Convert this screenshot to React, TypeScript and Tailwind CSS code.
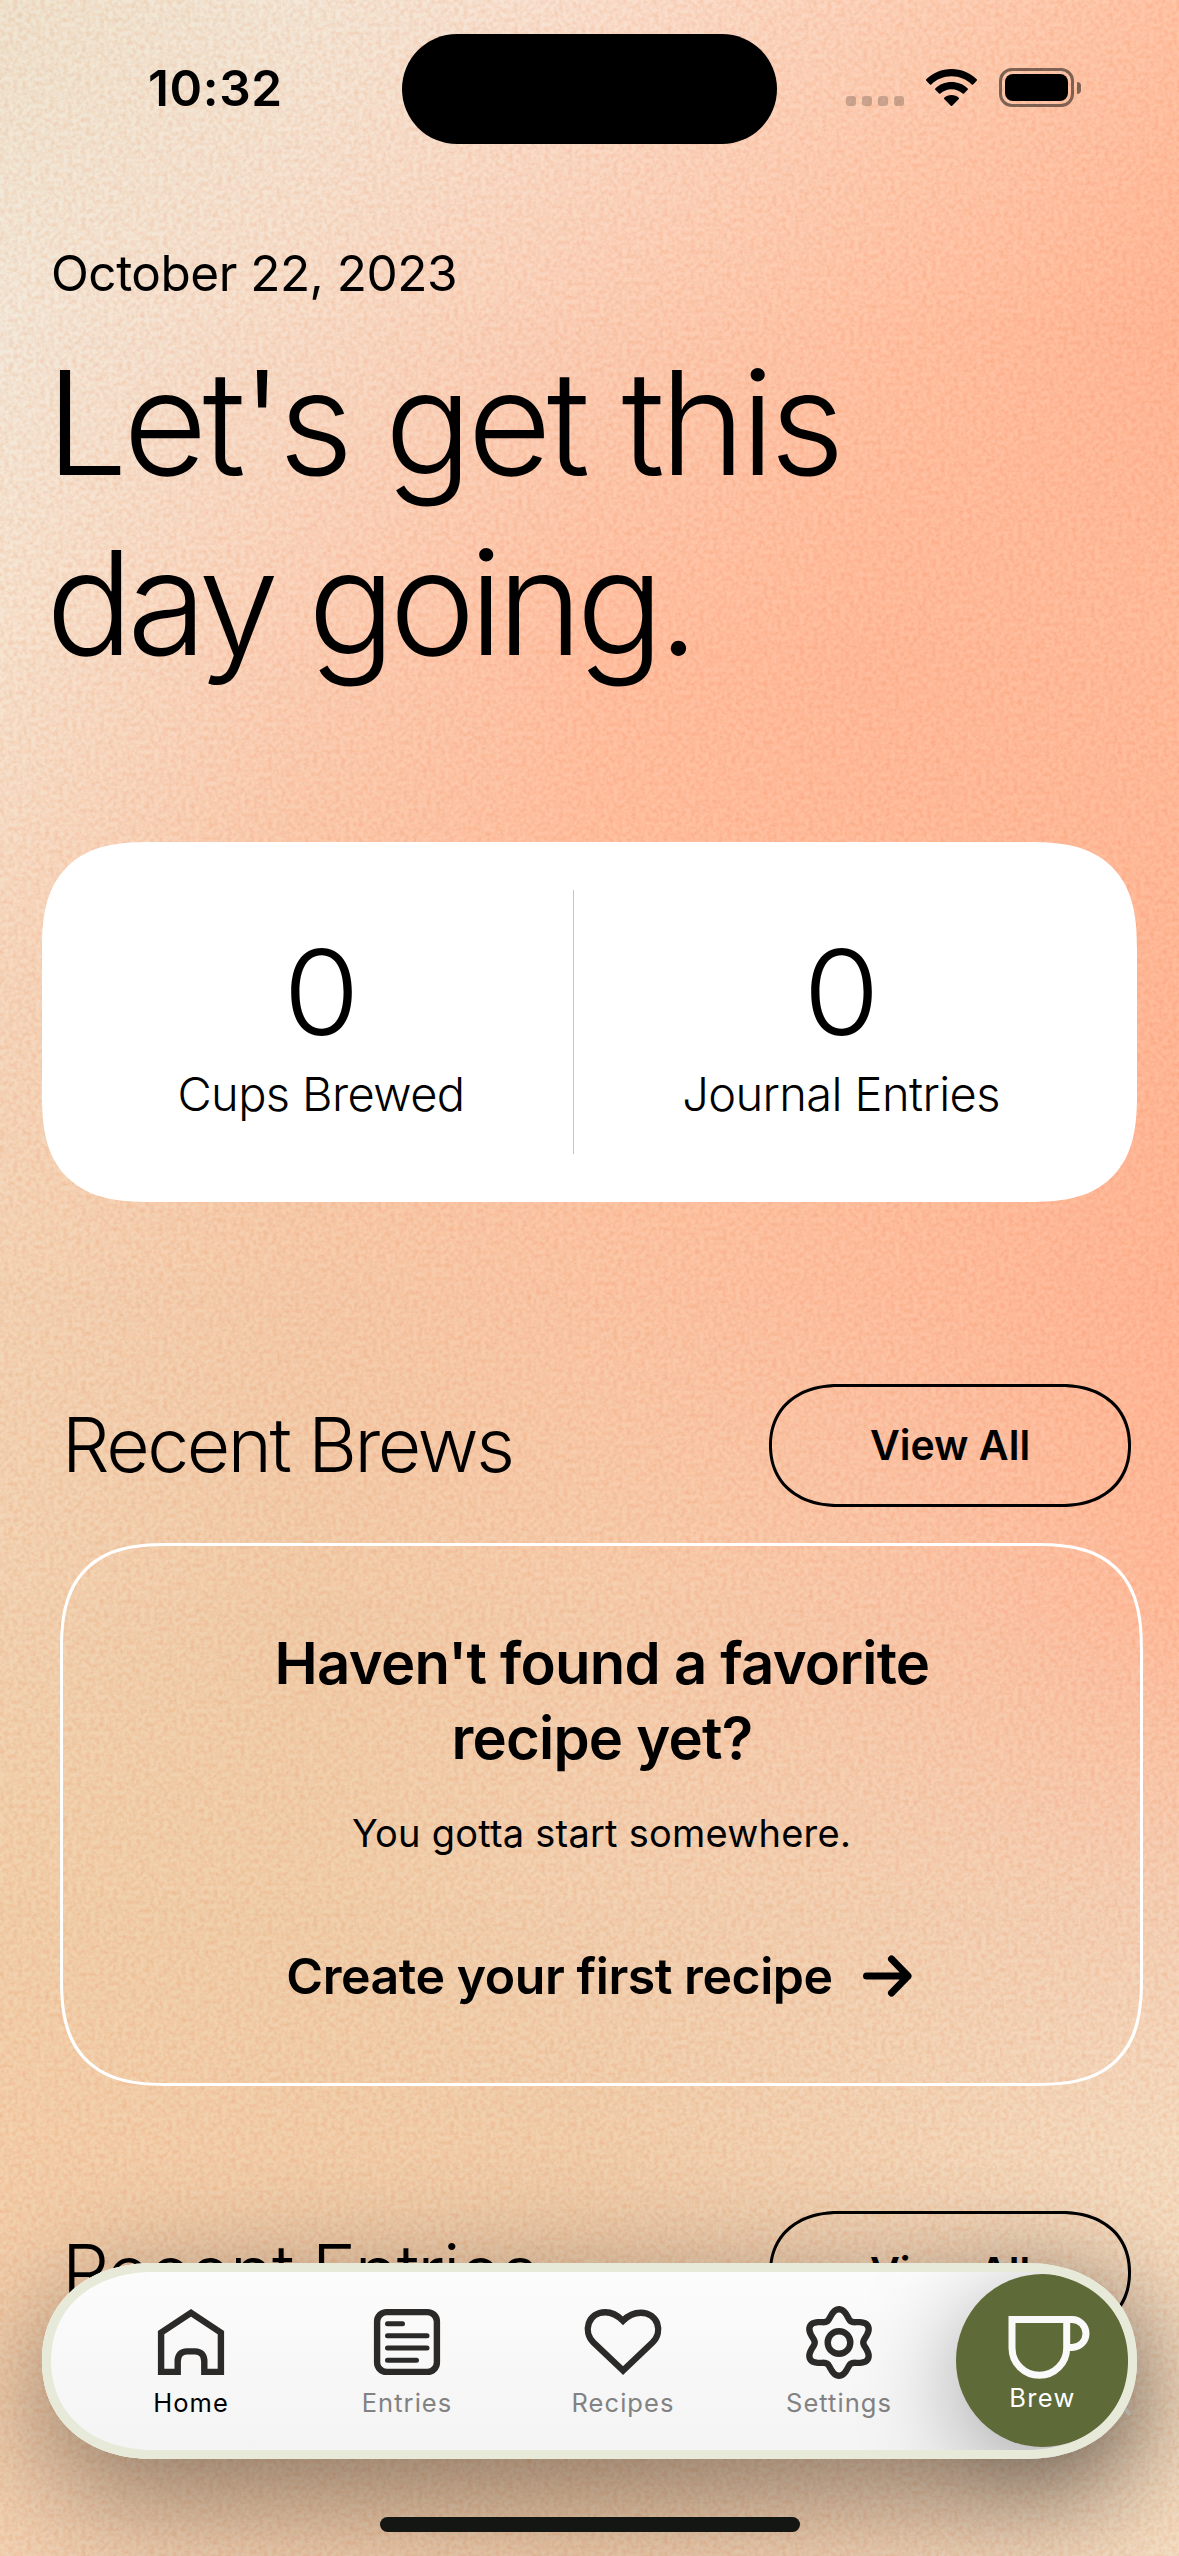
import React from "react";

/* Colour mesh of the backdrop: every row is a horizontal gradient that fades into the next one. */
const MESH: { y: number; colors: string[] }[] = [
  { y: 0, colors: ["#efe5d1", "#f3e9da", "#f9e2d2", "#fcd4bc", "#ffc6a8"] },
  { y: 320, colors: ["#f3eadc", "#f7dfcc", "#fbd1b9", "#ffc5a7", "#ffba9a"] },
  { y: 640, colors: ["#f6e5d2", "#fbd2ba", "#ffc3a5", "#ffbd9d", "#ffbf9f"] },
  { y: 960, colors: ["#f6dac2", "#fac9a9", "#ffc1a1", "#ffbf9e", "#ffbb9a"] },
  { y: 1280, colors: ["#f3d6b8", "#f5ceae", "#fbc8a8", "#fec1a2", "#ffb999"] },
  { y: 1600, colors: ["#f2d5b5", "#f1cfad", "#f5d0b0", "#f9caad", "#ffbe9f"] },
  { y: 1900, colors: ["#f1d2ae", "#f0d1ad", "#f2d3b4", "#f3d3b6", "#f5d2b8"] },
  { y: 2150, colors: ["#f3d1ad", "#f1d0ad", "#f0d0ae", "#f2d6b8", "#f4dec4"] },
  { y: 2556, colors: ["#f2d4b6", "#efd0b1", "#eeceae", "#f1d5b9", "#f4e0c6"] },
];

function Backdrop() {
  return (
    <div className="absolute inset-0 isolate overflow-hidden">
      {MESH.map((row, i) => {
        const top = i === 0 ? 0 : MESH[i - 1].y;
        const fade = `linear-gradient(to bottom, transparent 0px, black ${row.y - top}px)`;
        return (
          <div
            key={row.y}
            className="absolute inset-x-0 bottom-0"
            style={{
              top,
              backgroundImage: `linear-gradient(to right, ${row.colors.join(", ")})`,
              maskImage: i === 0 ? undefined : fade,
            }}
          />
        );
      })}
      <svg className="absolute inset-0 size-full opacity-50 mix-blend-multiply" aria-hidden="true">
        <filter id="grain" x="0" y="0" width="100%" height="100%" colorInterpolationFilters="sRGB">
          <feTurbulence type="fractalNoise" baseFrequency="0.22" numOctaves="3" seed="4" />
          <feColorMatrix values="0 0 0 0 0.97  0 0 0 0 0.8  0 0 0 0 0.7  1.9 0 0 0 -0.65" />
        </filter>
        <rect width="100%" height="100%" filter="url(#grain)" />
      </svg>
    </div>
  );
}

function StatusBar() {
  return (
    <header className="flex h-[178px] items-center">
      <div className="w-[402px] pb-[2px] pl-[148px] text-[49.5px] leading-[60px] font-semibold tracking-[0.6px]">10:32</div>
      <div className="h-[110px] w-[375px] rounded-full bg-black" />
      <div className="ml-[69px] flex gap-[6px] pt-[24px]">
        {[0, 1, 2, 3].map((n) => (
          <span key={n} className="size-[10px] rounded-[3px] bg-black/20" />
        ))}
      </div>
      <svg className="mb-[3px] ml-[22px] h-[38px] w-[51px]" viewBox="0 0 51 38">
        <path d="M25.5 0C35.3 0 44.2 3.9 50.7 10.3c.4.4.4 1 0 1.4l-3.6 3.7c-.4.4-1 .4-1.4 0C40.4 10.300 33.300 7.300 25.500 7.300S10.600 10.300 5.300 15.400c-.4.4-1 .4-1.400 0L.3 11.700c-.4-.4-.4-1 0-1.400C6.800 3.900 15.700 0 25.500 0Z" />
        <path d="M25.500 13c6.300 0 12 2.400 16.200 6.400.4.4.4 1 0 1.400l-3.700 3.700c-.4.4-1 .4-1.400 0-2.900-2.700-6.800-4.300-11.100-4.300s-8.200 1.600-11.100 4.300c-.4.4-1 .4-1.400 0l-3.700-3.700c-.4-.4-.4-1 0-1.400C13.500 15.400 19.200 13 25.500 13Z" />
        <path d="M25.500 26c2.800 0 5.300 1 7.300 2.700.4.4.4 1 0 1.400l-6.600 6.600c-.4.4-1 .4-1.400 0l-6.600-6.600c-.4-.4-.4-1 0-1.400C20.200 27 22.700 26 25.500 26Z" />
      </svg>
      <div className="mb-[3px] ml-[22px] flex items-center gap-[3px]">
        <div className="h-[39px] w-[75px] rounded-[13px] border-[3px] border-black/50 p-[3px]">
          <div className="size-full rounded-[8px] bg-black" />
        </div>
        <div className="h-[12px] w-[4px] rounded-r-full bg-black/50" />
      </div>
    </header>
  );
}

function Stat({ label, className }: { label: string; className: string }) {
  return (
    <div className={`flex flex-col items-center pt-[80px] font-light ${className}`}>
      <span className="scale-x-105 text-[118px] leading-[140px]">0</span>
      <span className="mt-[2px] text-[47px] leading-[60px] tracking-[-0.6px]">{label}</span>
    </div>
  );
}

function SectionHeader({ title, className, titleClassName }: { title: string; className: string; titleClassName: string }) {
  return (
    <div className={`flex items-center justify-between pr-[48px] pl-[62px] ${className}`}>
      <h2 className={`pb-[2px] text-[75px] leading-[90px] font-light ${titleClassName}`}>{title}</h2>
      <button className="h-[123px] w-[362px] rounded-[70px/61.5px] border-[3px] border-black text-[41px] font-semibold [corner-shape:superellipse(1.15)]">
        View All
      </button>
    </div>
  );
}

const GEAR =
  Array.from({ length: 180 }, (_, i) => {
    const a = (i / 180) * Math.PI * 2;
    const r = 28.8 + 4.5 * Math.cos(6 * a);
    return `${i === 0 ? "M" : "L"}${(37 + r * Math.sin(a)).toFixed(2)} ${(37.5 - r * Math.cos(a)).toFixed(2)}`;
  }).join("") + "Z";

const TABS: { label: string; active?: boolean; icon: React.ReactNode }[] = [
  {
    label: "Home",
    active: true,
    icon: <path d="M7.100 27.600 37 7.800 66.900 27.600V66.900H50.300V56.500C50.300 50 47 46.400 41 46.400H33C27 46.400 23.700 50 23.700 56.500V66.900H7.100Z" />,
  },
  {
    label: "Entries",
    icon: (
      <>
        <rect x="7.100" y="7.100" width="59.800" height="59.800" rx="9.500" />
        <path strokeWidth="5" strokeLinecap="round" d="M17.500 18.700H32.500M17.500 30.800H57M17.500 43H57M17.500 55.300H46.500" />
      </>
    ),
  },
  {
    label: "Recipes",
    icon: (
      <path d="M37 65.500 7.500 37.500C-3.500 26.500 2 7.200 19.300 7.200 27 7.200 31.500 10.200 37 15.700 42.500 10.200 47 7.700 54.700 7.700 72 8 77.500 26.500 66.500 37.500Z" />
    ),
  },
  {
    label: "Settings",
    icon: (
      <>
        <path d={GEAR} />
        <circle cx="37" cy="37.500" r="11.300" />
      </>
    ),
  },
];

function TabBar() {
  return (
    <nav className="absolute top-[2263px] left-[42px] h-[196px] w-[1095px] rounded-[112px/98px] bg-linear-to-b from-[#fcfcfc] to-[#f4f4f4] shadow-[0_36px_120px_rgba(0,0,0,0.42)] [corner-shape:superellipse(1.12)]">
      <svg className="absolute top-[143px] left-[1080px] h-[10px] w-[10px]" viewBox="0 0 10 10">
        <path d="M1 0 8 9" stroke="#c9c4be" strokeWidth="3.500" />
      </svg>
      <div className="flex pt-[42px] pl-[41px]">
        {TABS.map((tab) => (
          <div key={tab.label} className="flex w-[216px] flex-col items-center">
            <svg className="size-[74px] overflow-visible" viewBox="0 0 74 74" fill="none" stroke="#2b2a29" strokeWidth="6.400">
              {tab.icon}
            </svg>
            <span
              className={`mt-[7px] text-[25.5px] leading-[34px] tracking-[1.05px] ${tab.active ? "text-black" : "text-[#828282]"}`}
            >
              {tab.label}
            </span>
          </div>
        ))}
      </div>
      <button className="absolute top-[11px] left-[914px] flex size-[173px] flex-col items-center rounded-full bg-[#5e6a37] pt-[42px] text-white shadow-[0_22px_100px_rgba(0,0,0,0.34)]">
        <svg className="h-[63px] w-[70px] overflow-visible" viewBox="0 0 70 63" fill="none" stroke="#f9f9f9" strokeWidth="7">
          <path d="M4 3.500H58.700V32A27.350 27.350 0 0 1 4 32Z" />
          <path d="M58.700 3.500H64A14 14 0 0 1 64 31.500H58.700" />
        </svg>
        <span className="mt-[2px] text-[25.5px] leading-[34px] tracking-[1.4px]">Brew</span>
      </button>
      <div className="pointer-events-none absolute inset-0 rounded-[112px/98px] border-[9px] border-[#e7ead8] [corner-shape:superellipse(1.12)]" />
    </nav>
  );
}

export default function App() {
  return (
    <div className="relative h-[2556px] w-[1179px] overflow-hidden bg-[#f4cfae] font-['Inter',sans-serif] text-black">
      <Backdrop />
      <div className="relative">
        <StatusBar />
        <main>
          <p className="mt-[65px] pl-[51px] text-[49.5px] leading-[60px] tracking-[-0.5px]">October 22, 2023</p>
          <h1 className="mt-[30px] pl-[46px] text-[145px] leading-[180px] font-light">
            <span className="block tracking-[-4.7px]">Let's get this</span>
            <span className="block tracking-[-6px]">day going.</span>
          </h1>

          <section className="mt-[149px] ml-[42px] flex h-[360px] w-[1095px] items-center rounded-[108px] bg-white [corner-shape:superellipse(1.4)]">
            <Stat label="Cups Brewed" className="h-full w-[531px] pl-[27px]" />
            <div className="h-[264px] w-px bg-[#c6c6c6]" />
            <Stat label="Journal Entries" className="h-full flex-1 pr-[29px]" />
          </section>

          <SectionHeader title="Recent Brews" className="mt-[182px]" titleClassName="tracking-[-2.4px]" />
          <section className="mt-[36px] ml-[60px] flex h-[543px] w-[1083px] flex-col items-center rounded-[108px] border-[3px] border-white pt-[80px] text-center [corner-shape:superellipse(1.4)]">
            <h3 className="pl-[1px] text-[58px] leading-[75px] font-semibold tracking-[-0.75px]">
              Haven't found a favorite
              <br />
              recipe yet?
            </h3>
            <p className="mt-[32px] text-[38px] leading-[50px] tracking-[0.23px]">You gotta start somewhere.</p>
            <div className="mt-[88px] mr-[5px] flex items-center gap-[30px]">
              <span className="text-[50px] leading-[60px] font-semibold tracking-[-0.46px]">Create your first recipe</span>
              <svg className="h-[42px] w-[49px]" viewBox="0 0 49 42" fill="none" stroke="black" strokeWidth="7" strokeLinecap="round" strokeLinejoin="round">
                <path d="M3.500 21H45M28.500 4 45 21 28.500 38" />
              </svg>
            </div>
          </section>

          <SectionHeader title="Recent Entries" className="mt-[125px]" titleClassName="tracking-[-1.9px]" />
        </main>
      </div>
      <TabBar />
      <div className="absolute top-[2517px] left-[380px] h-[15px] w-[420px] rounded-full bg-[#141614]" />
    </div>
  );
}
